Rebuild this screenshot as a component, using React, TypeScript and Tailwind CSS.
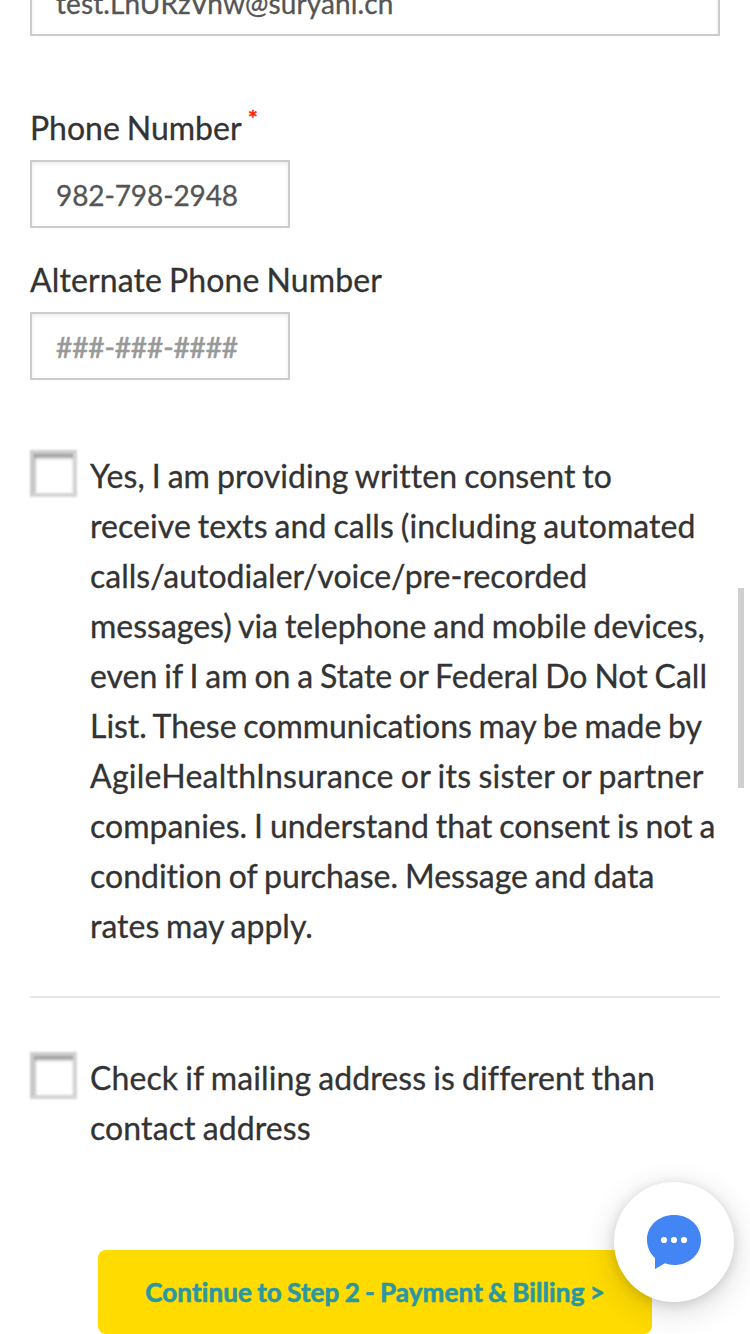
import React from "react";

const fieldClass =
  "block h-[68px] rounded-none border-2 border-[#ccc] bg-white px-6 pt-[2px] text-[28px] text-[#555] outline-none placeholder:text-[#999] placeholder:opacity-100 shadow-[inset_0_2px_4px_rgba(0,0,0,0.08)]";

function Checkbox() {
  return (
    <span className="block h-[47px] w-[47px] shrink-0 border-[4px] border-[#d4d4d4] border-l-[#cacaca] border-t-[#cdcdcd] bg-white shadow-[inset_1px_4px_3px_rgba(0,0,0,0.38)] blur-[0.9px]" />
  );
}

function ChatButton() {
  return (
    <button
      aria-label="Chat"
      className="absolute left-[614px] top-[1182px] flex h-[120px] w-[120px] items-center justify-center rounded-full bg-white shadow-[0_8px_32px_rgba(0,0,0,0.16),0_2px_12px_rgba(0,0,0,0.12)]"
    >
      <svg width="54" height="54" viewBox="0 0 54 54">
        <path
          d="M27 0C12 0 0 10.5 0 25C0 32 3 38.500 8 43V54L18 48.300C21 49.500 24 50 27 50C42 50 54 39.500 54 25C54 10.500 42 0 27 0Z"
          fill="#4485f6"
        />
        <circle cx="17" cy="25" r="3.100" fill="white" />
        <circle cx="27" cy="25" r="3.100" fill="white" />
        <circle cx="37" cy="25" r="3.100" fill="white" />
      </svg>
    </button>
  );
}

export default function App() {
  return (
    <div className="relative h-[1334px] w-[750px] overflow-hidden bg-white font-['Lato',sans-serif] text-[32px] leading-[50px] text-[#333] [font-variant-ligatures:none] [word-spacing:-1.3px] [-webkit-text-stroke:0.3px]">
      <form className="-mt-8 flex flex-col px-[30px]">
        <input className={`${fieldClass} w-[690px] tracking-[0.1px]`} defaultValue="test.LnURzVnw@suryani.cn" aria-label="Email" />

        <label className="mt-[67px] flex h-[50px] whitespace-pre">
          Phone Number <span className="-mt-[10px] text-[24px] text-[#ff2600] [-webkit-text-stroke:0.6px]">*</span>
        </label>
        <input className={`${fieldClass} mt-[7px] w-[260px] tracking-[-0.1px]`} defaultValue="982-798-2948" aria-label="Phone Number" />

        <label className="mt-[27px] h-[50px] tracking-[0.12px]">Alternate Phone Number</label>
        <input className={`${fieldClass} mt-[7px] w-[260px] tracking-[-0.1px] [-webkit-text-stroke:0.6px]`} placeholder="###-###-####" aria-label="Alternate Phone Number" />

        <div className="mt-[70px] flex gap-[13px]">
          <Checkbox />
          <p className="mt-px whitespace-nowrap">
            <span className="tracking-[0.06px]">Yes, I am providing written consent to</span><br />
            <span className="tracking-[0.07px]">receive texts and calls (including automated</span><br />
            calls/autodialer/voice/pre-recorded<br />
            messages) via telephone and mobile devices,<br />
            even if I am on a State or Federal Do Not Call<br />
            <span className="tracking-[-0.05px]">List. These communications may be made by</span><br />
            <span className="tracking-[0.25px]">AgileHealthInsurance or its sister or partner</span><br />
            companies. I understand that consent is not a<br />
            condition of purchase. Message and data<br />
            rates may apply.
          </p>
        </div>

        <hr className="mt-[45px] border-t-2 border-[#e6e6e6]" />

        <div className="mt-[54px] flex gap-[13px]">
          <Checkbox />
          <p className="mt-px whitespace-nowrap tracking-[0.11px]">
            Check if mailing address is different than<br />
            contact address
          </p>
        </div>

        <button
          type="button"
          className="ml-[68px] mt-[97px] h-[84px] w-[554px] rounded-[8px] bg-[#ffdb00] text-[26px] font-bold tracking-[0.13px] text-[#2b97a3] [word-spacing:-1.3px] [-webkit-text-stroke:0.6px]"
        >
          Continue to Step 2 - Payment &amp; Billing &gt;
        </button>
      </form>

      <div className="absolute left-[738px] top-[588px] h-[200px] w-[6px] bg-[#cfcfcf]" />
      <ChatButton />
    </div>
  );
}
